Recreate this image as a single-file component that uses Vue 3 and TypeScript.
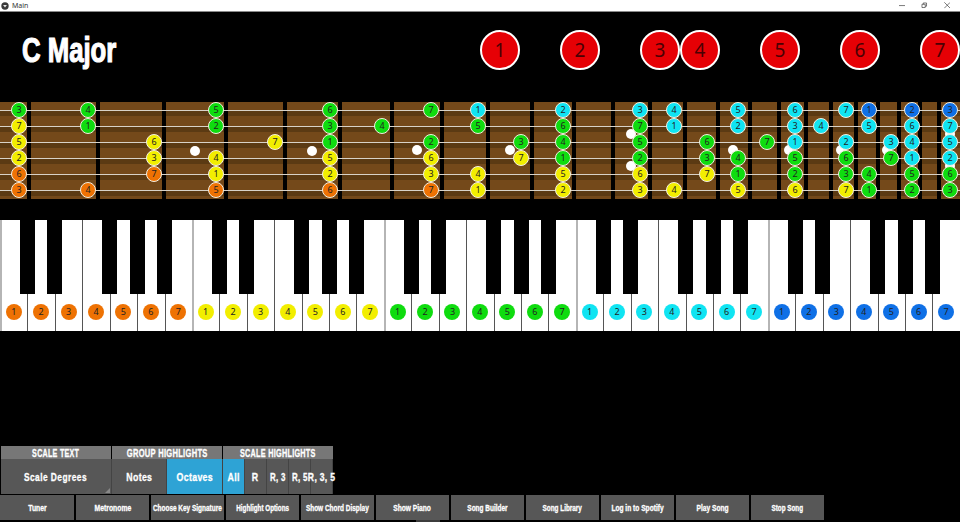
<template>
  <div class="window">
    <div class="titlebar">
      <svg class="app-icon" viewBox="0 0 10 10">
        <circle cx="5" cy="5" r="4.6" fill="#3a3a3a" />
        <path d="M2.6 3.6h4.8L5 7z" fill="#e8e8e8" />
      </svg>
      <span class="title-text">Main</span>
      <div class="win-controls">
        <svg viewBox="0 0 10 10" class="win-btn"><path d="M0 5.5h10" stroke="#333" /></svg>
        <svg viewBox="0 0 10 10" class="win-btn"><path d="M1.5 3.5h5v5h-5zM3.5 3.5v-2h5v5h-2" fill="none" stroke="#333" /></svg>
        <svg viewBox="0 0 10 10" class="win-btn"><path d="M.5.5l9 9M9.5.5l-9 9" stroke="#333" /></svg>
      </div>
    </div>

    <div class="header">
      <div class="scale-box"><h1 class="scale-name">C Major</h1></div>
      <div class="degrees">
        <div v-for="d in degrees" :key="d.n" class="degree" :style="{ marginLeft: d.gap + 'px' }">{{ d.n }}</div>
      </div>
    </div>

    <div class="fretboard">
      <div class="frets">
        <div v-for="(w, i) in fretWidths" :key="i" class="fret" :style="{ width: w + 'px' }"></div>
      </div>
      <div v-for="y in stringYs" :key="y" class="string" :style="{ top: y + 'px' }"></div>
      <div v-for="(m, i) in inlays" :key="'i' + i" class="inlay" :style="{ left: m[0] + 'px', top: m[1] + 'px' }"></div>
      <div
        v-for="(n, i) in fretNotes"
        :key="'n' + i"
        class="note"
        :class="n.color"
        :style="{ left: n.x + 'px', top: stringYs[n.row] + 'px' }"
      >{{ n.label }}</div>
    </div>

    <div class="piano">
      <div v-for="(k, i) in whiteKeys" :key="i" class="white-key" :class="{ octave: i % 7 === 0 }">
        <span class="key-dot" :class="k.color">{{ k.label }}</span>
      </div>
      <div v-for="x in blackKeys" :key="x" class="black-key" :style="{ left: x + 'px' }"></div>
    </div>

    <div class="controls">
      <div class="row heads">
        <div v-for="h in heads" :key="h.text" class="head" :style="{ width: h.w + 'px' }">
          <span class="squeeze" :style="{ transform: `scaleX(${h.sx})` }">{{ h.text }}</span>
        </div>
      </div>
      <div class="row options">
        <div
          v-for="o in options"
          :key="o.text"
          class="opt"
          :class="{ on: o.on, spinner: o.text === 'Scale Degrees' }"
          :style="{ width: o.w + 'px' }"
        >
          <span class="squeeze" :style="{ transform: `scaleX(${o.sx})` }">{{ o.text }}</span>
        </div>
      </div>
      <div class="row tabs">
        <div v-for="t in tabs" :key="t.text" class="tab" :class="{ on: t.text === 'Highlight Options' }">
          <span class="squeeze" :style="{ transform: `scaleX(${t.sx})` }">{{ t.text }}</span>
        </div>
      </div>
    </div>
    <div class="peek"></div>
  </div>
</template>

<script setup lang="ts">
type NoteColor = 'orange' | 'yellow' | 'green' | 'cyan' | 'blue'

const C: Record<string, NoteColor> = { o: 'orange', y: 'yellow', g: 'green', c: 'cyan', b: 'blue' }

const degrees = [
  { n: 1, gap: 0 },
  { n: 2, gap: 40 },
  { n: 3, gap: 40 },
  { n: 4, gap: 0 },
  { n: 5, gap: 40 },
  { n: 6, gap: 40 },
  { n: 7, gap: 40 },
]

// black fret bars sit at the right edge of each width
const fretWidths = [31, 69, 66, 62, 59, 55, 52, 50, 46, 44, 42, 39, 37, 35, 33, 32, 29, 27, 25, 25, 22, 21, 21, 19]

const stringYs = [8, 24, 40, 56, 72, 88]

const inlays = [
  [195, 49], [312, 49], [417, 48], [510, 48], [631, 32], [631, 64],
  [733, 48], [789, 48], [841, 48], [887, 48], [950, 32], [950, 64],
]

// x position, then "row:label+color" for every note at that position
const columns: [number, string][] = [
  [19, '03g 17y 25y 32y 46o 53o'],
  [88, '04g 11g 54o'],
  [154, '26y 33y 47o'],
  [216, '05g 12g 34y 41y 55o'],
  [275, '27y'],
  [330, '06g 13g 21g 35y 42y 56o'],
  [382, '14g'],
  [431, '07g 22g 36y 43y 57o'],
  [478, '01c 15g 44y 51y'],
  [521, '23g 37y'],
  [563, '02c 16g 24g 31g 45y 52y'],
  [640, '03c 17g 25g 32g 46y 53y'],
  [674, '04c 11c 54y'],
  [707, '26g 33g 47y'],
  [738, '05c 12c 34g 41g 55y'],
  [767, '27g'],
  [795, '06c 13c 21c 35g 42g 56y'],
  [821, '14c'],
  [846, '07c 22c 36g 43g 57y'],
  [869, '01b 15c 44g 51g'],
  [891, '23c 37g'],
  [912, '02b 16c 24c 31c 45g 52g'],
  [950, '03b 17c 25c 32c 46g 53g'],
]

const fretNotes = columns.flatMap(([x, cells]) =>
  cells.split(' ').map((c) => ({ x, row: Number(c[0]), label: c[1], color: C[c[2]] })),
)

const octaves: NoteColor[] = ['orange', 'yellow', 'green', 'cyan', 'blue']
const whiteKeys = octaves.flatMap((color) =>
  [1, 2, 3, 4, 5, 6, 7].map((label) => ({ label, color })),
)

const blackKeys = [0, 192, 384, 576, 768].flatMap((o) =>
  [20, 47, 102, 130, 157].map((x) => o + x),
)

// sx squeezes the text to the narrow face of the original
const heads = [
  { text: 'SCALE TEXT', w: 110.2, sx: 0.68 },
  { text: 'GROUP HIGHLIGHTS', w: 110, sx: 0.72 },
  { text: 'SCALE HIGHLIGHTS', w: 110, sx: 0.69 },
]

const options = [
  { text: 'Scale Degrees', w: 111, sx: 0.76, on: false },
  { text: 'Notes', w: 55, sx: 0.8, on: false },
  { text: 'Octaves', w: 56, sx: 0.8, on: true },
  { text: 'All', w: 22, sx: 0.8, on: true },
  { text: 'R', w: 22, sx: 0.8, on: false },
  { text: 'R, 3', w: 22, sx: 0.72, on: false },
  { text: 'R, 5', w: 22, sx: 0.72, on: false },
  { text: 'R, 3, 5', w: 22, sx: 0.78, on: false },
]

const tabs = [
  { text: 'Tuner', sx: 0.8 },
  { text: 'Metronome', sx: 0.8 },
  { text: 'Choose Key Signature', sx: 0.76 },
  { text: 'Highlight Options', sx: 0.74 },
  { text: 'Show Chord Display', sx: 0.76 },
  { text: 'Show Piano', sx: 0.78 },
  { text: 'Song Builder', sx: 0.76 },
  { text: 'Song Library', sx: 0.75 },
  { text: 'Log in to Spotify', sx: 0.78 },
  { text: 'Play Song', sx: 0.78 },
  { text: 'Stop Song', sx: 0.74 },
]
</script>

<style>
html, body {
  margin: 0;
  background: #000;
}
</style>

<style scoped>
.window {
  position: relative;
  width: 960px;
  height: 522px;
  background: #000;
  overflow: hidden;
  display: flex;
  flex-direction: column;
  font-family: "Liberation Sans", sans-serif;
}

.titlebar {
  height: 11px;
  flex-shrink: 0;
  background: #fff;
  border-bottom: 1px solid #8a8a8a;
  display: flex;
  align-items: center;
  padding-left: 1px;
  font-family: "Noto Sans", sans-serif;
}

.app-icon {
  width: 8px;
  height: 8px;
}

.title-text {
  margin-left: 3px;
  font-size: 7px;
  color: #333;
}

.win-controls {
  margin-left: auto;
  display: flex;
  gap: 16px;
  padding-right: 10px;
}

.win-btn {
  width: 6.5px;
  height: 6.5px;
}

.header {
  height: 90px;
  flex-shrink: 0;
  display: flex;
}

.scale-box {
  width: 480px;
  padding: 18px 0 0 22px;
  box-sizing: border-box;
}

.scale-name {
  display: inline-block;
  margin: 0;
  font-size: 35px;
  line-height: 40px;
  font-weight: 700;
  color: #fff;
  white-space: nowrap;
  -webkit-text-stroke: 1.2px #fff;
  transform: scaleX(0.735);
  transform-origin: left center;
}

.degrees {
  display: flex;
  align-items: flex-start;
  padding-top: 18px;
}

.degree {
  width: 36px;
  height: 36px;
  border: 2px solid #fff;
  border-radius: 50%;
  background: #e60005;
  color: #4a0003;
  font: 19px/36px "Noto Sans", sans-serif;
  text-align: center;
  flex-shrink: 0;
}

.fretboard {
  position: relative;
  height: 97px;
  flex-shrink: 0;
  background: repeating-linear-gradient(#74491a 0 9px, #5b3a13 9px 14px, #74491a 14px 16px);
}

.frets {
  display: flex;
  height: 100%;
}

.fret {
  box-sizing: border-box;
  border-right: 4px solid #000;
  flex-shrink: 0;
}

.string {
  position: absolute;
  left: 0;
  right: 0;
  height: 1px;
  background: #d8d2c8;
}

.inlay {
  position: absolute;
  width: 10px;
  height: 10px;
  margin: -5px 0 0 -5px;
  border-radius: 50%;
  background: #fff;
}

.note {
  position: absolute;
  box-sizing: border-box;
  width: 16px;
  height: 16px;
  margin: -8px 0 0 -8px;
  border: 1px solid #f3efe2;
  border-radius: 50%;
  font: 9px/14px "Noto Sans", sans-serif;
  color: #222;
  text-align: center;
}

.orange { background: #ee7203; }
.yellow { background: #f2ee00; }
.green { background: #0fdc0f; }
.cyan { background: #10e4f2; }
.blue { background: #0f70e6; }

.piano {
  position: relative;
  margin-top: 21px;
  height: 111px;
  flex-shrink: 0;
  display: flex;
}

.white-key {
  flex: 1;
  background: #fff;
  box-shadow: inset 1px 0 #555;
  display: flex;
  justify-content: center;
  align-items: flex-end;
  padding-bottom: 11.5px;
}

.white-key.octave {
  box-shadow: inset 2px 0 #b5b5b5;
}

.key-dot {
  width: 16px;
  height: 16px;
  border-radius: 50%;
  font: 9px/16px "Noto Sans", sans-serif;
  color: #222;
  text-align: center;
}

.black-key {
  position: absolute;
  top: 0;
  width: 15px;
  height: 74px;
  background: #000;
}

.controls {
  margin-top: auto;
  padding-bottom: 2px;
  display: flex;
  flex-direction: column;
  gap: 1px;
  color: #fff;
  font-weight: 700;
  -webkit-text-stroke: 0.3px #fff;
}

.row {
  display: flex;
  padding-left: 1px;
}

.heads {
  height: 13px;
  gap: 1px;
}

.head,
.opt,
.tab {
  display: flex;
  justify-content: center;
  align-items: center;
  white-space: nowrap;
}

.squeeze {
  flex-shrink: 0;
}

.head {
  background: #777;
  font-size: 10.5px;
  letter-spacing: 0.4px;
}

.options {
  height: 35px;
  margin-top: -1px;
}

.opt {
  box-sizing: border-box;
  background: #575757;
  border-right: 1px solid #444;
  font-size: 11px;
  letter-spacing: 0.4px;
  padding-top: 1px;
}

.spinner {
  position: relative;
  letter-spacing: 0.6px;
}

.spinner::after {
  content: "";
  position: absolute;
  right: 1px;
  bottom: 1px;
  border-left: 5px solid transparent;
  border-bottom: 5px solid #888;
}

.on {
  background: #2ea3d5;
}

.tabs {
  padding-left: 0;
  gap: 2px;
  height: 25px;
}

.tab {
  width: 73px;
  background: #575757;
  font-size: 8.5px;
}

.tab:first-child {
  width: 74px;
}

.peek {
  position: absolute;
  left: 416px;
  bottom: 0;
  width: 24px;
  height: 2px;
  background: #3c3c3c;
}
</style>
